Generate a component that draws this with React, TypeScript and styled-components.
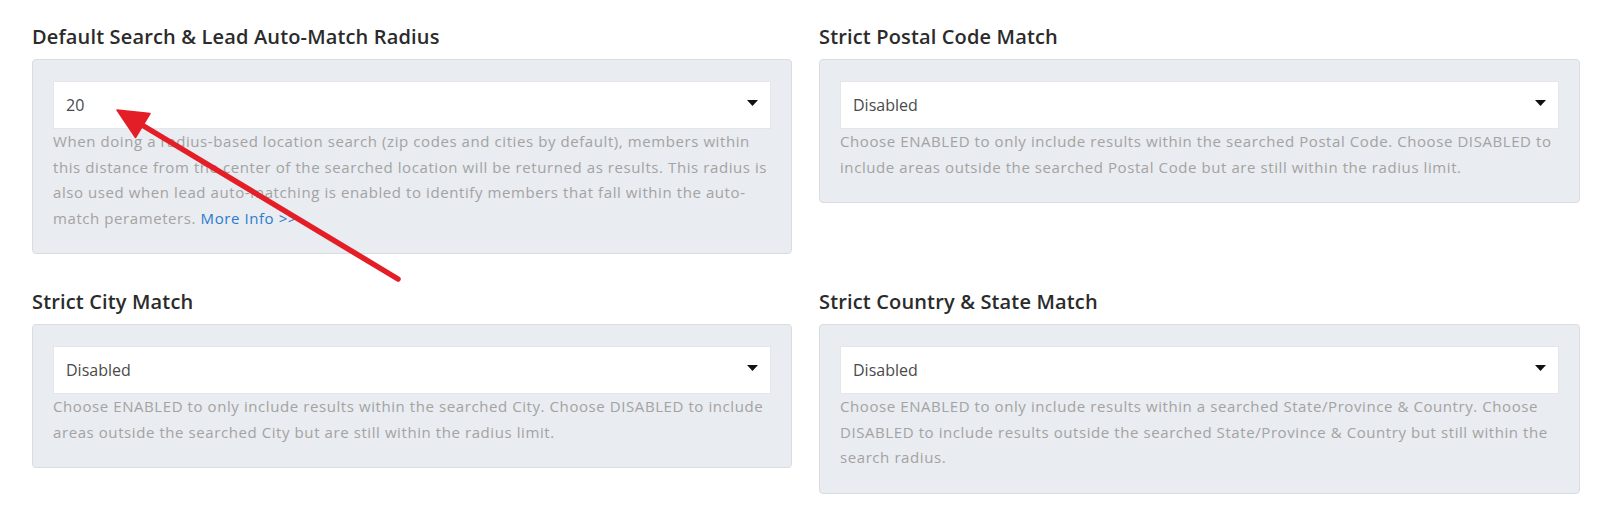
import React from 'react'
import styled, { createGlobalStyle } from 'styled-components'

const GlobalStyle = createGlobalStyle`
  html, body {
    margin: 0;
    padding: 0;
    background: #fff;
  }
  body {
    font-family: 'Open Sans', 'Noto Sans', sans-serif;
    -webkit-font-smoothing: antialiased;
  }
`

const Page = styled.div`
  position: relative;
  width: 1618px;
  height: 514px;
  overflow: hidden;
`

const SettingsGrid = styled.div`
  display: grid;
  grid-template-columns: 760px 761px;
  column-gap: 27px;
  row-gap: 34px;
  align-items: start;
  padding: 23px 38px 0 32px;
`

const Field = styled.div`
  display: flex;
  flex-direction: column;
`

const FieldTitle = styled.h3`
  margin: 0 0 8px;
  font-size: 20px;
  line-height: 28px;
  font-weight: 600;
  letter-spacing: 0.15px;
  color: #2b2b2b;
`

const Panel = styled.div`
  background: #e9ecf0;
  border: 1px solid #d9dde2;
  border-radius: 4px;
  padding: 21px 20px 22px;
`

const SelectWrap = styled.div`
  position: relative;
`

const Select = styled.select`
  appearance: none;
  display: block;
  width: 100%;
  height: 48px;
  margin: 0;
  padding: 0 40px 0 12px;
  border: 1px solid #e3e6ea;
  border-radius: 0;
  background: #fff;
  font-family: inherit;
  font-size: 16px;
  color: #4a4a4a;
  outline: none;
`

const Caret = styled.svg`
  position: absolute;
  right: 13px;
  top: 19px;
  pointer-events: none;
`

const Help = styled.p`
  margin: 0;
  font-size: 15px;
  line-height: 25.5px;
  letter-spacing: 0.58px;
  color: #a3a3a3;
`

const MoreLink = styled.a`
  color: #2a7bcf;
  text-decoration: none;
`

const Arrow = styled.svg`
  position: absolute;
  left: 0;
  top: 0;
  pointer-events: none;
`

type FieldProps = {
  title: string
  value: string
  options: string[]
  children: React.ReactNode
}

function SettingField({ title, value, options, children }: FieldProps) {
  return (
    <Field>
      <FieldTitle>{title}</FieldTitle>
      <Panel>
        <SelectWrap>
          <Select defaultValue={value}>
            {options.map((o) => (
              <option key={o} value={o}>
                {o}
              </option>
            ))}
          </Select>
          <Caret width="11" height="6" viewBox="0 0 11 6">
            <path d="M0 0h11L5.5 6z" fill="#111" />
          </Caret>
        </SelectWrap>
        <Help>{children}</Help>
      </Panel>
    </Field>
  )
}

const toggle = ['Disabled', 'Enabled']

export default function App() {
  return (
    <Page>
      <GlobalStyle />
      <SettingsGrid>
        <SettingField title="Default Search & Lead Auto-Match Radius" value="20" options={['5', '10', '20', '50', '100']}>
          When doing a radius-based location search (zip codes and cities by default), members within this distance
          from the center of the searched location will be returned as results. This radius is also used when lead
          auto-matching is enabled to identify members that fall within the auto-match perameters.{' '}
          <MoreLink href="#">More Info &gt;&gt;</MoreLink>
        </SettingField>
        <SettingField title="Strict Postal Code Match" value="Disabled" options={toggle}>
          Choose ENABLED to only include results within the searched Postal Code. Choose DISABLED to include areas
          outside the searched Postal Code but are still within the radius limit.
        </SettingField>
        <SettingField title="Strict City Match" value="Disabled" options={toggle}>
          Choose ENABLED to only include results within the searched City. Choose DISABLED to include areas outside the
          searched City but are still within the radius limit.
        </SettingField>
        <SettingField title="Strict Country & State Match" value="Disabled" options={toggle}>
          Choose ENABLED to only include results within a searched State/Province &amp; Country. Choose DISABLED to
          include results outside the searched State/Province &amp; Country but still within the search radius.
        </SettingField>
      </SettingsGrid>
      <Arrow width="1618" height="514" viewBox="0 0 1618 514">
        <line x1="142" y1="125" x2="398" y2="279" stroke="#e41e26" strokeWidth="5.5" strokeLinecap="round" />
        <path d="M117 110L150 113.5L135.5 137.5Z" fill="#e41e26" stroke="#e41e26" strokeWidth="1.5" strokeLinejoin="round" />
      </Arrow>
    </Page>
  )
}
